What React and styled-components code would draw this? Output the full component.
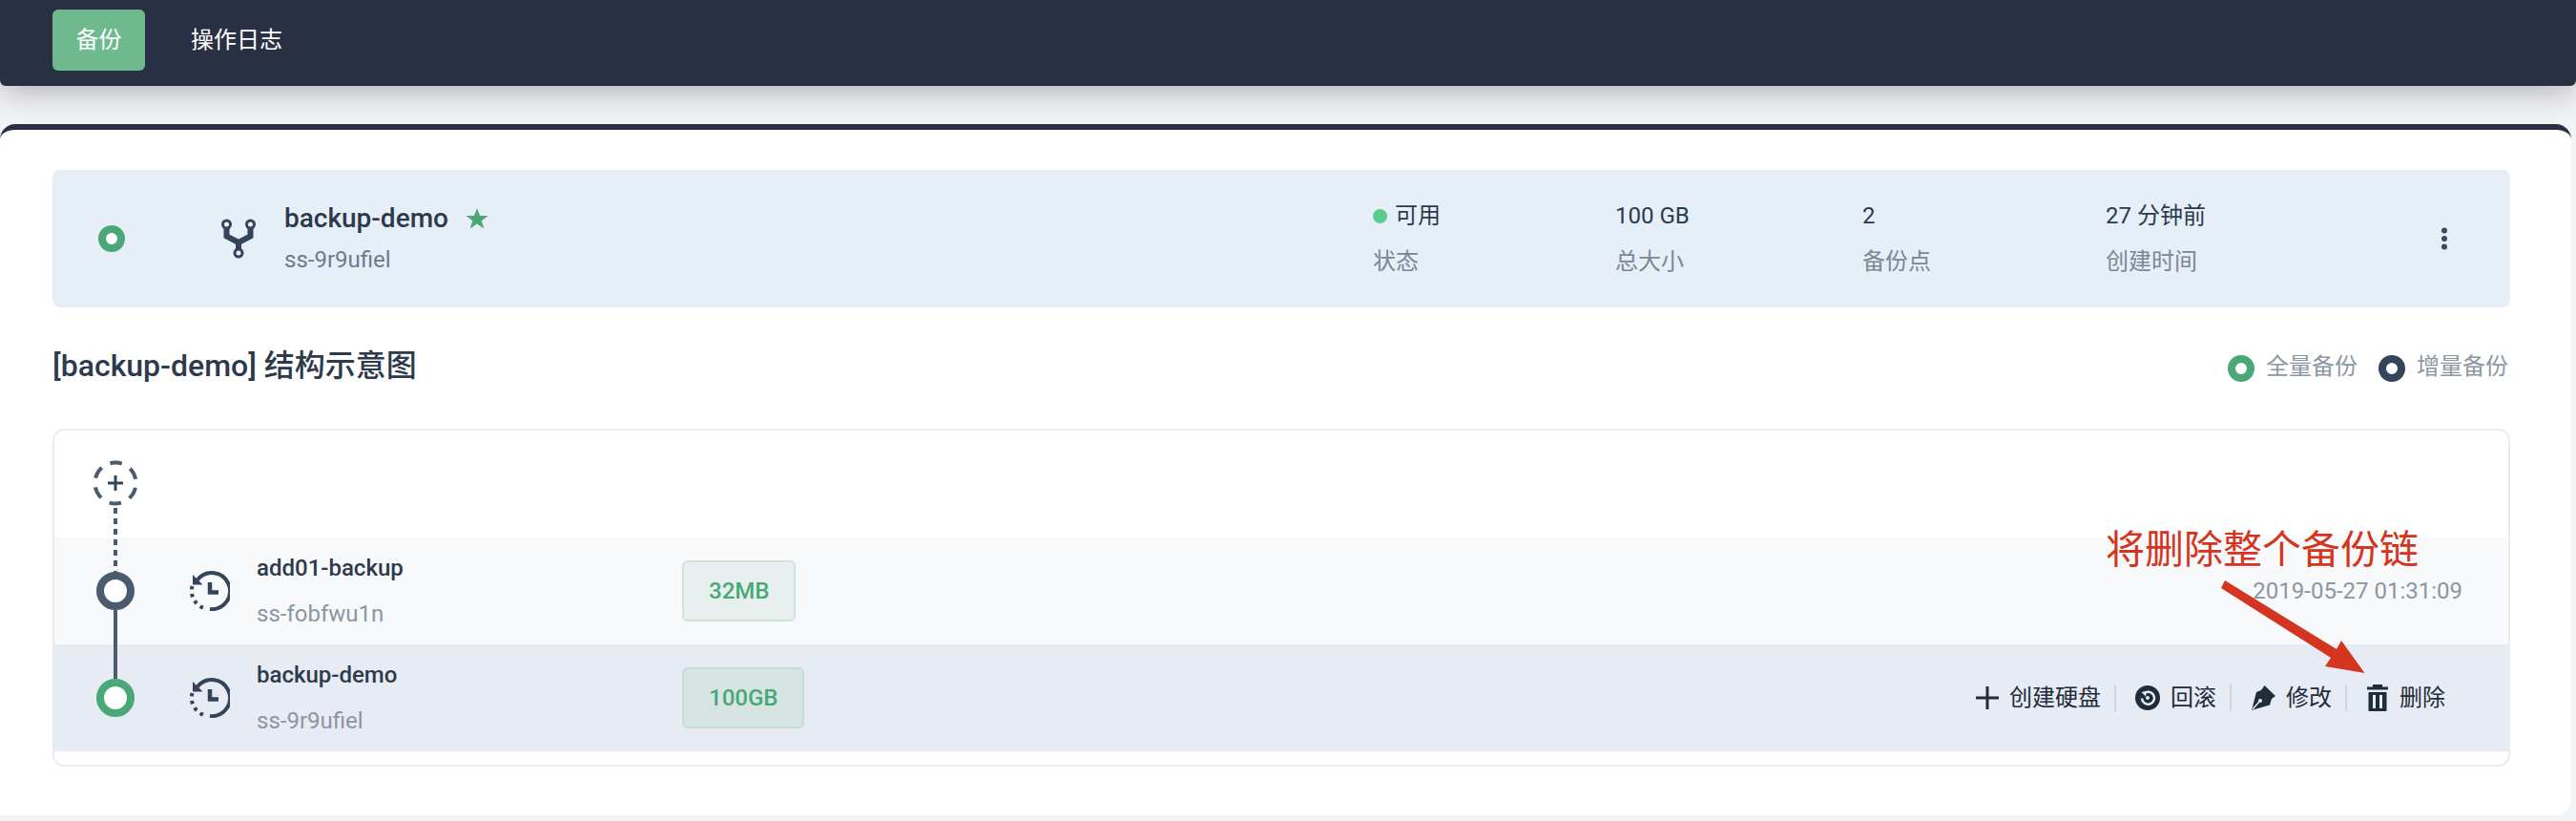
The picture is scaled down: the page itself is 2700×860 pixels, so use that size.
import React from "react";
import styled, { createGlobalStyle } from "styled-components";

const GlobalStyle = createGlobalStyle`
	html, body {
		margin: 0;
		padding: 0;
		background: #f3f4f5;
		font-family: Roboto, "Noto Sans CJK SC", sans-serif;
	}
`;

const GREEN = "#4aa876";
const SLATE = "#4c5a6e";
const INK = "#2c3a4b";

const ForkIcon = () => (
	<svg width="36" height="42" viewBox="0 0 36 42" fill="none">
		<circle cx="5.5" cy="6" r="4" stroke="#34445a" strokeWidth="3" />
		<circle cx="30.5" cy="6" r="4" stroke="#34445a" strokeWidth="3" />
		<circle cx="18" cy="36" r="4" stroke="#34445a" strokeWidth="3" />
		<path d="M5.5 10v8.500l12.500 6.500 12.500-6.500v-8.500M18 25v7" stroke="#34445a" strokeWidth="6" />
	</svg>
);

const StarIcon = () => (
	<svg width="24" height="24" viewBox="0 0 24 24">
		<path d="M12 1l3 8h8.500l-6.800 5.200 2.600 8.300L12 17.500l-7.300 5 2.600-8.300L.5 9H9z" fill={GREEN} />
	</svg>
);

const DotsIcon = () => (
	<svg width="8" height="24" viewBox="0 0 8 24" fill="#3c4a5c">
		<circle cx="4" cy="3.500" r="3" />
		<circle cx="4" cy="12" r="3" />
		<circle cx="4" cy="20.500" r="3" />
	</svg>
);

const AddIcon = () => (
	<svg width="48" height="48" viewBox="0 0 48 48" fill="none">
		<circle cx="24" cy="24" r="21.500" stroke={SLATE} strokeWidth="4" strokeDasharray="12.510 10" strokeDashoffset="-5" />
		<path d="M24 16v16M16 24h16" stroke="#34445a" strokeWidth="3" />
	</svg>
);

const HistoryIcon = () => (
	<svg width="42" height="42" viewBox="0 0 42 42" fill="none">
		<path d="M8 9.500A19 19 0 1 1 21 40" stroke="#34445a" strokeWidth="4" />
		<path d="M3 4v10.500h10.500" fill="#34445a" />
		<path d="M2.500 16a19 19 0 0 0 14 23.500" stroke="#34445a" strokeWidth="4" strokeDasharray="3.500 4.500" />
		<path d="M21 12v10.500h9" stroke="#34445a" strokeWidth="4.500" />
	</svg>
);

const PlusIcon = () => (
	<svg width="24" height="24" viewBox="0 0 24 24">
		<path d="M12 0v24M0 12h24" stroke="#1f2c3a" strokeWidth="3" />
	</svg>
);

const RollbackIcon = () => (
	<svg width="26" height="26" viewBox="0 0 26 26">
		<circle cx="13" cy="13" r="13" fill="#1f2c3a" />
		<path d="M9 8.500a6.500 6.500 0 1 1-2 5" fill="none" stroke="#e7ebf3" strokeWidth="2.500" />
		<path d="M6.500 7l5.500-1-1 5.500z" fill="#e7ebf3" />
		<circle cx="13" cy="13" r="2" fill="#e7ebf3" />
	</svg>
);

const PenIcon = () => (
	<svg width="26" height="26" viewBox="0 0 26 26">
		<path d="M14.500 0L26 11l-4 3-2 6.500L1 26 6 7l5-2z" fill="#1f2c3a" />
		<path d="M2 25l7-8" stroke="#e7ebf3" strokeWidth="1.500" />
		<circle cx="10" cy="16" r="2" fill="#e7ebf3" />
	</svg>
);

const TrashIcon = () => (
	<svg width="24" height="28" viewBox="0 0 24 28">
		<path d="M7 0h10v2.500h6v3H1v-3h6z" fill="#1f2c3a" />
		<path d="M2.500 8h19v20h-19zM7 11v14h3V11zM14 11v14h3V11z" fill="#1f2c3a" fillRule="evenodd" />
	</svg>
);

const ArrowIcon = () => (
	<svg width="165" height="110" viewBox="0 0 165 110">
		<path d="M12 6L129 78l5-9 24.500 34L117 96l6-9L8 14z" fill="#d33520" />
	</svg>
);

const App = () => {
	return (
		<Page>
			<GlobalStyle />
			<TopNav>
				<NavItem $active>备份</NavItem>
				<NavItem>操作日志</NavItem>
			</TopNav>
			<Card>
				<Summary>
					<SummaryRing />
					<ForkSlot>
						<ForkIcon />
					</ForkSlot>
					<SummaryName>
						<TitleLine>
							<Title>backup-demo</Title>
							<StarIcon />
						</TitleLine>
						<SubId>ss-9r9ufiel</SubId>
					</SummaryName>
					<Stat $width={254}>
						<StatValue>
							<StatusDot />
							可用
						</StatValue>
						<StatLabel>状态</StatLabel>
					</Stat>
					<Stat $width={259}>
						<StatValue>100 GB</StatValue>
						<StatLabel>总大小</StatLabel>
					</Stat>
					<Stat $width={255}>
						<StatValue>2</StatValue>
						<StatLabel>备份点</StatLabel>
					</Stat>
					<Stat $width={351}>
						<StatValue>27 分钟前</StatValue>
						<StatLabel>创建时间</StatLabel>
					</Stat>
					<DotsIcon />
				</Summary>

				<SectionHead>
					<SectionTitle>[backup-demo] 结构示意图</SectionTitle>
					<Legend>
						<LegendRing $color={GREEN} />
						<LegendText>全量备份</LegendText>
						<LegendRing $color="#34445a" />
						<LegendText>增量备份</LegendText>
					</Legend>
				</SectionHead>

				<ChainBox>
					<AddRow>
						<AddSlot>
							<AddIcon />
						</AddSlot>
					</AddRow>
					<ChainRow>
						<NodeSlot>
							<Node $color={SLATE} />
						</NodeSlot>
						<HistoryIcon />
						<RowName>
							<RowTitle>add01-backup</RowTitle>
							<RowId>ss-fobfwu1n</RowId>
						</RowName>
						<SizeBadge>32MB</SizeBadge>
						<RowTime>2019-05-27 01:31:09</RowTime>
					</ChainRow>
					<ChainRow $selected>
						<NodeSlot>
							<Node $color={GREEN} $linked />
						</NodeSlot>
						<HistoryIcon />
						<RowName>
							<RowTitle>backup-demo</RowTitle>
							<RowId>ss-9r9ufiel</RowId>
						</RowName>
						<SizeBadge $selected>100GB</SizeBadge>
						<Actions>
							<Action>
								<PlusIcon />
								创建硬盘
							</Action>
							<Action>
								<RollbackIcon />
								回滚
							</Action>
							<Action>
								<PenIcon />
								修改
							</Action>
							<Action>
								<TrashIcon />
								删除
							</Action>
						</Actions>
					</ChainRow>
					<Annotation>将删除整个备份链</Annotation>
					<ArrowMark>
						<ArrowIcon />
					</ArrowMark>
				</ChainBox>
			</Card>
		</Page>
	);
};

const Page = styled.div`
	width: 2700px;
	height: 860px;
	overflow: hidden;
	background: #f3f4f5;
`;

const TopNav = styled.div`
	height: 90px;
	box-sizing: border-box;
	padding: 10px 55px;
	display: flex;
	gap: 24px;
	background: #2a3043;
	border-radius: 0 0 6px 6px;
	box-shadow: 0 4px 36px rgba(30, 34, 42, 0.36);
`;

const NavItem = styled.div`
	width: ${({ $active }) => ($active ? "97px" : "auto")};
	height: 64px;
	line-height: 64px;
	text-align: center;
	font-size: 24px;
	color: #fff;
	border-radius: 6px;
	background: ${({ $active }) => ($active ? "#6fb98f" : "transparent")};
	padding: ${({ $active }) => ($active ? "0" : "0 24px")};
`;

const Card = styled.div`
	margin-top: 40px;
	width: 2695px;
	height: 724px;
	box-sizing: border-box;
	padding: 42px 64px 0 55px;
	background: #fff;
	border-top: 6px solid #2a3043;
	border-radius: 16px 16px 16px 0;
`;

const Summary = styled.div`
	height: 144px;
	display: flex;
	align-items: center;
	padding-left: 48px;
	background: #e6eef8;
	border-radius: 8px;
`;

const SummaryRing = styled.div`
	width: 28px;
	height: 28px;
	box-sizing: border-box;
	border: 8px solid ${GREEN};
	border-radius: 50%;
	background: #fff;
`;

const ForkSlot = styled.div`
	margin-left: 101px;
	width: 66px;
	display: flex;
`;

const SummaryName = styled.div`
	width: 1141px;
`;

const TitleLine = styled.div`
	display: flex;
	align-items: center;
	gap: 18px;
`;

const Title = styled.div`
	font-size: 28px;
	line-height: 38px;
	font-weight: 500;
	color: ${INK};
`;

const SubId = styled.div`
	margin-top: 5px;
	font-size: 24px;
	line-height: 38px;
	color: #6f7b89;
`;

const Stat = styled.div`
	width: ${({ $width }) => $width}px;
`;

const StatValue = styled.div`
	display: flex;
	align-items: center;
	gap: 8px;
	font-size: 24px;
	line-height: 36px;
	color: ${INK};
`;

const StatusDot = styled.span`
	width: 15px;
	height: 15px;
	border-radius: 50%;
	background: #5ccb8e;
`;

const StatLabel = styled.div`
	margin-top: 12px;
	font-size: 24px;
	line-height: 36px;
	color: #7c8794;
`;

const SectionHead = styled.div`
	height: 127px;
	display: flex;
	align-items: center;
	justify-content: space-between;
	padding-right: 2px;
`;

const SectionTitle = styled.div`
	font-size: 32px;
	line-height: 40px;
	font-weight: 500;
	margin-top: -5px;
	color: ${INK};
`;

const Legend = styled.div`
	display: flex;
	align-items: center;
`;

const LegendRing = styled.span`
	width: 28px;
	height: 28px;
	box-sizing: border-box;
	border: 8px solid ${({ $color }) => $color};
	border-radius: 50%;
	background: #fff;
	margin-left: 22px;
`;

const LegendText = styled.span`
	margin-left: 12px;
	font-size: 24px;
	line-height: 28px;
	margin-top: -3px;
	color: #8c96a2;
`;

const ChainBox = styled.div`
	position: relative;
	height: 354px;
	box-sizing: border-box;
	padding-top: 112px;
	border: 2px solid #e9edf3;
	border-radius: 12px;
`;

const AddRow = styled.div`
	position: absolute;
	top: 31px;
	left: 40px;
`;

const AddSlot = styled.div`
	position: relative;
	display: flex;
	&::after {
		content: "";
		position: absolute;
		left: 22px;
		top: 50px;
		width: 4px;
		height: 68px;
		background: repeating-linear-gradient(to bottom, ${SLATE} 0 6px, transparent 6px 11px);
	}
`;

const ChainRow = styled.div`
	height: 112px;
	display: flex;
	align-items: center;
	background: ${({ $selected }) => ($selected ? "#e7ebf3" : "#f8f9fb")};
`;

const NodeSlot = styled.div`
	width: 142px;
	padding-left: 44px;
	box-sizing: border-box;
`;

const Node = styled.div`
	position: relative;
	width: 40px;
	height: 40px;
	box-sizing: border-box;
	border: 8px solid ${({ $color }) => $color};
	border-radius: 50%;
	background: #fff;
	&::before {
		content: "";
		display: ${({ $linked }) => ($linked ? "block" : "none")};
		position: absolute;
		left: 10px;
		bottom: 32px;
		width: 4px;
		height: 72px;
		background: ${SLATE};
	}
`;

const RowName = styled.div`
	margin-left: 28px;
	width: 446px;
`;

const RowTitle = styled.div`
	font-size: 24px;
	line-height: 32px;
	font-weight: 500;
	color: ${INK};
`;

const RowId = styled.div`
	margin-top: 16px;
	font-size: 24px;
	line-height: 32px;
	color: #8c96a2;
`;

const SizeBadge = styled.div`
	height: 64px;
	line-height: 60px;
	box-sizing: border-box;
	padding: 0 26px;
	font-size: 24px;
	font-weight: 500;
	color: ${GREEN};
	border: 2px solid ${({ $selected }) => ($selected ? "#c4ddd4" : "#cde3dc")};
	border-radius: 6px;
	background: ${({ $selected }) => ($selected ? "#d6e5e4" : "#e7f0ef")};
`;

const RowTime = styled.div`
	margin-left: auto;
	padding-right: 48px;
	font-size: 24px;
	color: #8c96a2;
`;

const Actions = styled.div`
	margin-left: auto;
	padding-right: 66px;
	display: flex;
	align-items: center;
`;

const Action = styled.div`
	display: flex;
	align-items: center;
	gap: 11px;
	font-size: 24px;
	color: #1f2c3a;
	padding: 0 14px 0 20px;
	border-right: 2px solid #cfd6df;
	line-height: 28px;
	&:last-child {
		border-right: 0;
		padding-right: 0;
	}
`;

const Annotation = styled.div`
	position: absolute;
	top: 101px;
	right: 94px;
	font-size: 41px;
	line-height: 48px;
	color: #d33520;
`;

const ArrowMark = styled.div`
	position: absolute;
	top: 151px;
	left: 2263px;
	display: flex;
`;

export default App;
